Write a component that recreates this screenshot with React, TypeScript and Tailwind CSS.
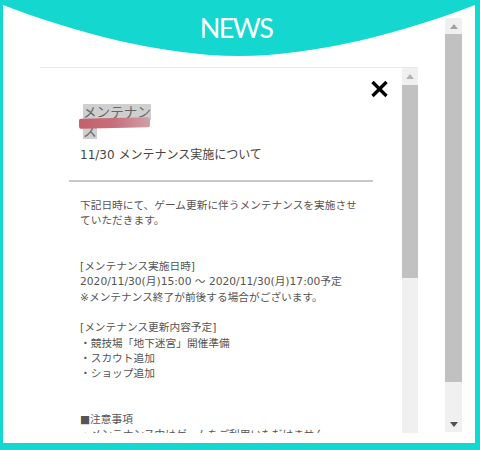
import React from 'react';

const body = `下記日時にて、ゲーム更新に伴うメンテナンスを実施させていただきます。


[メンテナンス実施日時]
2020/11/30(月)15:00 ～ 2020/11/30(月)17:00予定
※メンテナンス終了が前後する場合がございます。

[メンテナンス更新内容予定]
・競技場「地下迷宮」開催準備
・スカウト追加
・ショップ追加


■注意事項
・メンテナンス中はゲームをご利用いただけません。`;

function Arrow({ up, color }: { up?: boolean; color: string }) {
  return (
    <svg width="8" height="5" viewBox="0 0 8 5">
      {up ? <path d="M0 5 L4 0 L8 5 Z" fill={color} /> : <path d="M0 0 L8 0 L4 5 Z" fill={color} />}
    </svg>
  );
}

function CloseIcon() {
  return (
    <svg width="19" height="18" viewBox="0 0 19 18">
      <path d="M2.5 2 L16.5 16 M16.5 2 L2.5 16" stroke="#000" strokeWidth="3.3" />
    </svg>
  );
}

export default function App() {
  return (
    <div className="w-[480px] h-[450px] bg-[#14d8d0] pl-[3px] pr-[5px] pb-[7px] font-['DejaVu_Sans','Noto_Sans_CJK_JP',sans-serif]">
      <div className="relative h-full bg-white flex">
        {/* Header curve */}
        <div className="absolute inset-x-0 top-0 h-[60px] pointer-events-none">
          <svg className="absolute inset-0" width="472" height="60" viewBox="0 0 472 60">
            <path d="M0 0 H472 V5 C402 32 312 56 236 56 C160 56 70 32 0 5 Z" fill="#14d8d0" />
          </svg>
          <div className="relative flex justify-center pt-[12px] pr-[6px]">
            <span className="text-white text-[27px] leading-[32px] tracking-[-1.5px] font-['Lato',sans-serif]">NEWS</span>
          </div>
        </div>

        {/* Page column */}
        <div className="flex-1 pt-[67px] pl-[37px] pr-[27px] pb-[10px] flex">
          <div className="flex-1 border-t border-[#e8e8e8] flex overflow-hidden">
            <div className="relative flex-1 px-[29px] pt-[35px] overflow-hidden">
              <button className="absolute top-[12px] right-[13px]">
                <CloseIcon />
              </button>

              <div className="relative w-[72px] ml-[14px] text-[13.6px] leading-[19px] text-[#666]">
                <span className="bg-[#cfcfcf]">メンテナンス</span>
                <div className="absolute left-[-4px] top-[15px] w-[71px] h-[10px] rounded-[2px] rotate-[-1.3deg] bg-gradient-to-r from-[#c3606d] via-[#c86f7b] to-[#cfa0a6]" />
              </div>

              <div className="mt-[6px] pl-[11px] text-[12px] leading-[16px] text-[#444]">11/30 メンテナンス実施について</div>

              <div className="mt-[17px] h-[2px] bg-[#c5c8cc]" />

              <div className="mt-[16px] pl-[11px] pr-[8px] text-[10.7px] leading-[15.3px] text-[#555] whitespace-pre-line">
                {body}
              </div>
            </div>

            {/* Inner scrollbar */}
            <div className="w-[16px] bg-[#f0f0f0] flex flex-col">
              <div className="h-[17px] flex items-center justify-center">
                <Arrow up color="#b4b4b4" />
              </div>
              <div className="h-[193px] bg-[#c1c1c1]" />
            </div>
          </div>
        </div>

        {/* Outer scrollbar */}
        <div className="w-[17px] mt-[18px] mb-[11px] mr-[13px] bg-[#f0f0f0] flex flex-col">
          <div className="h-[16px] flex items-center justify-center">
            <Arrow up color="#a3a3a3" />
          </div>
          <div className="h-[348px] bg-[#c1c1c1]" />
          <div className="flex-1" />
          <div className="h-[16px] flex items-center justify-center">
            <Arrow color="#505050" />
          </div>
        </div>
      </div>
    </div>
  );
}
